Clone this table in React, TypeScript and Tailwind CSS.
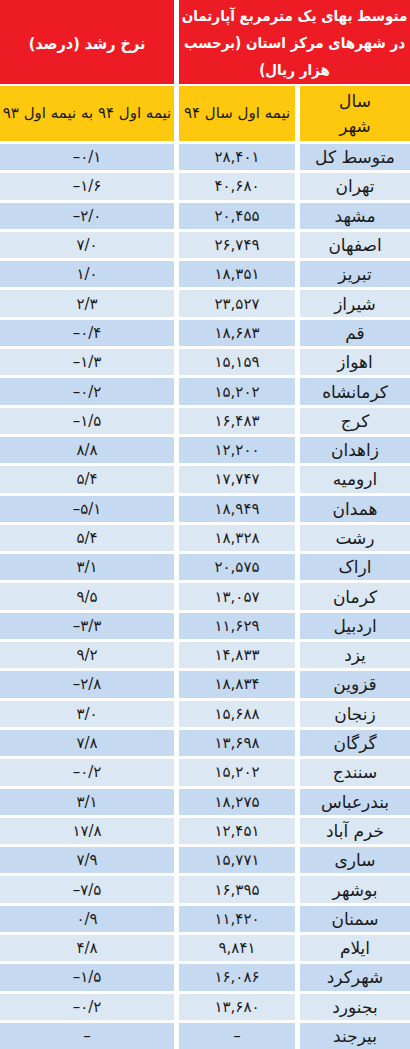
const rows: [string, string, string][] = [
  ["متوسط کل", "۲۸,۴۰۱", "–۰/۱"],
  ["تهران", "۴۰,۶۸۰", "–۱/۶"],
  ["مشهد", "۲۰,۴۵۵", "–۲/۰"],
  ["اصفهان", "۲۶,۷۴۹", "۷/۰"],
  ["تبریز", "۱۸,۳۵۱", "۱/۰"],
  ["شیراز", "۲۳,۵۲۷", "۲/۳"],
  ["قم", "۱۸,۶۸۳", "–۰/۴"],
  ["اهواز", "۱۵,۱۵۹", "–۱/۳"],
  ["کرمانشاه", "۱۵,۲۰۲", "–۰/۲"],
  ["کرج", "۱۶,۴۸۳", "–۱/۵"],
  ["زاهدان", "۱۲,۲۰۰", "۸/۸"],
  ["ارومیه", "۱۷,۷۴۷", "۵/۴"],
  ["همدان", "۱۸,۹۴۹", "–۵/۱"],
  ["رشت", "۱۸,۳۲۸", "۵/۴"],
  ["اراک", "۲۰,۵۷۵", "۳/۱"],
  ["کرمان", "۱۳,۰۵۷", "۹/۵"],
  ["اردبیل", "۱۱,۶۲۹", "–۳/۳"],
  ["یزد", "۱۴,۸۳۳", "۹/۲"],
  ["قزوین", "۱۸,۸۳۴", "–۲/۸"],
  ["زنجان", "۱۵,۶۸۸", "۳/۰"],
  ["گرگان", "۱۳,۶۹۸", "۷/۸"],
  ["سنندج", "۱۵,۲۰۲", "–۰/۲"],
  ["بندرعباس", "۱۸,۲۷۵", "۳/۱"],
  ["خرم آباد", "۱۲,۴۵۱", "۱۷/۸"],
  ["ساری", "۱۵,۷۷۱", "۷/۹"],
  ["بوشهر", "۱۶,۳۹۵", "–۷/۵"],
  ["سمنان", "۱۱,۴۲۰", "۰/۹"],
  ["ایلام", "۹,۸۴۱", "۴/۸"],
  ["شهرکرد", "۱۶,۰۸۶", "–۱/۵"],
  ["بجنورد", "۱۳,۶۸۰", "–۰/۲"],
  ["بیرجند", "–", "–"],
];

export default function App() {
  return (
    <div
      dir="rtl"
      className="w-[410px] h-[1049px] overflow-hidden bg-white font-['DejaVu_Sans',sans-serif] text-[#1a1a1a]"
    >
      {/* header */}
      <div className="grid grid-cols-[231px_174px] gap-x-[5px] h-[83px]">
        <div className="bg-[#ed1c24] text-white font-bold text-[15px] leading-[27px] text-center pt-[3px] whitespace-nowrap relative z-10 font-['DejaVu_Sans_Condensed','DejaVu_Sans',sans-serif] tracking-[-0.3px]">
          متوسط بهای یک مترمربع آپارتمان
          <br />
          در شهرهای مرکز استان (برحسب
          <br />
          هزار ریال)
        </div>
        <div className="bg-[#ed1c24] text-white font-bold text-[16px] flex items-center justify-center pt-[4px] font-['DejaVu_Sans_Condensed','DejaVu_Sans',sans-serif]">
          نرخ رشد (درصد)
        </div>
      </div>

      <div className="grid grid-cols-[110px_116px_174px] gap-x-[5px] h-[55px] mt-[3px] text-[15px]">
        <div className="bg-[#fdc80e] flex flex-col items-center justify-center leading-[25px] text-[17px]">
          <span>سال</span>
          <span>شهر</span>
        </div>
        <div className="bg-[#fdc80e] flex items-center justify-center whitespace-nowrap">
          نیمه اول سال ۹۴
        </div>
        <div className="bg-[#fdc80e] flex items-center justify-center whitespace-nowrap">
          نیمه اول ۹۴ به نیمه اول ۹۳
        </div>
      </div>

      <div className="flex flex-col gap-y-[3px] mt-[3px] h-[905px]">
        {rows.map(([city, price, rate], i) => {
          const bg = i % 2 === 0 ? "bg-[#c5d9f0]" : "bg-[#dce7f4]";
          return (
            <div
              key={city}
              className="grid grid-cols-[110px_116px_174px] gap-x-[5px] flex-1 min-h-0 leading-[20px]"
            >
              <div className={`${bg} flex items-center justify-center text-[17px]`}>
                {city}
              </div>
              <div dir="ltr" className={`${bg} flex items-center justify-center text-[15px]`}>
                {price}
              </div>
              <div dir="ltr" className={`${bg} flex items-center justify-center text-[15px]`}>
                {rate}
              </div>
            </div>
          );
        })}
      </div>
    </div>
  );
}
